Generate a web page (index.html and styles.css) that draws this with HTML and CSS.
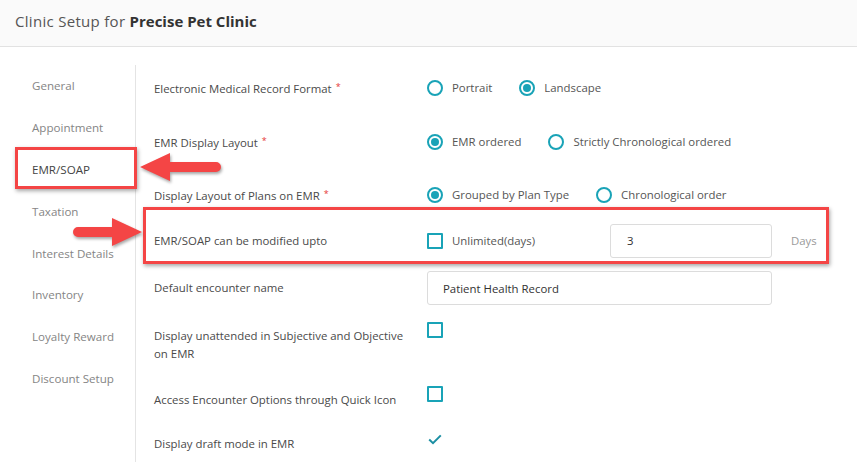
FILE: index.html
```
<!DOCTYPE html>
<html>
<head>
<meta charset="utf-8">
<link rel="stylesheet" href="styles.css">
</head>
<body>
<header class="topbar">
  <h1 class="title">Clinic Setup for <b>Precise Pet Clinic</b></h1>
</header>
<div class="layout">
  <nav class="side">
    <a class="side-item">General</a>
    <a class="side-item">Appointment</a>
    <a class="side-item side-item--active">EMR/SOAP</a>
    <a class="side-item">Taxation</a>
    <a class="side-item">Interest Details</a>
    <a class="side-item">Inventory</a>
    <a class="side-item">Loyalty Reward</a>
    <a class="side-item">Discount Setup</a>
  </nav>
  <main class="form">
    <div class="row row--first">
      <div class="label">Electronic Medical Record Format<span class="req">*</span></div>
      <div class="control">
        <label class="opt"><span class="radio"></span>Portrait</label>
        <label class="opt"><span class="radio radio--on"></span>Landscape</label>
      </div>
    </div>
    <div class="row row--radio">
      <div class="label">EMR Display Layout<span class="req">*</span></div>
      <div class="control">
        <label class="opt"><span class="radio radio--on"></span>EMR ordered</label>
        <label class="opt"><span class="radio"></span>Strictly Chronological ordered</label>
      </div>
    </div>
    <div class="row row--radio">
      <div class="label">Display Layout of Plans on EMR<span class="req">*</span></div>
      <div class="control">
        <label class="opt"><span class="radio radio--on"></span>Grouped by Plan Type</label>
        <label class="opt"><span class="radio"></span>Chronological order</label>
      </div>
    </div>
    <div class="row row--days">
      <div class="label">EMR/SOAP can be modified upto</div>
      <div class="control">
        <label class="opt opt--fixed"><span class="box"></span>Unlimited(days)</label>
        <div class="input input--days">3</div>
        <span class="unit">Days</span>
      </div>
    </div>
    <div class="row row--name">
      <div class="label">Default encounter name</div>
      <div class="control">
        <div class="input input--wide">Patient Health Record</div>
      </div>
    </div>
    <div class="row row--top row--unattended">
      <div class="label">Display unattended in Subjective and Objective on EMR</div>
      <div class="control control--top"><span class="box"></span></div>
    </div>
    <div class="row row--top row--quick">
      <div class="label">Access Encounter Options through Quick Icon</div>
      <div class="control control--top"><span class="box"></span></div>
    </div>
    <div class="row row--top row--draft">
      <div class="label">Display draft mode in EMR</div>
      <div class="control control--check">
        <svg class="tick" width="14" height="11" viewBox="0 0 14 11"><path d="M1.2 5.6 L5 9.2 L12.8 1.4" fill="none" stroke="#1b8fa3" stroke-width="2"/></svg>
      </div>
    </div>
  </main>
</div>

<div class="note note--menu"></div>
<div class="note note--row"></div>
<svg class="arrow arrow--left" width="86" height="36" viewBox="0 0 86 36"><path d="M2 17 L32 3 L32 12 L78 12 A5 5 0 0 1 78 22 L32 22 L32 31 Z" fill="#f44545"/></svg>
<svg class="arrow arrow--right" width="76" height="36" viewBox="0 0 76 36"><path d="M72 17 L42 3 L42 12 L8 12 A5 5 0 0 0 8 22 L42 22 L42 31 Z" fill="#f44545"/></svg>
</body>
</html>
```
FILE: styles.css
```
* { box-sizing: border-box; }
html, body { margin: 0; padding: 0; }
body {
  position: relative;
  width: 857px;
  height: 462px;
  overflow: hidden;
  background: #fff;
  font-family: "Open Sans", "Noto Sans", sans-serif;
  color: #4a4a4a;
}

.topbar {
  height: 47px;
  background: #fafafa;
  border-bottom: 1px solid #e2e2e2;
  padding: 11px 0 0 15px;
}
.title {
  margin: 0;
  font-size: 15px;
  line-height: 20px;
  font-weight: 400;
  letter-spacing: 0.3px;
  color: #555;
}
.title b { font-weight: 700; letter-spacing: 0; color: #333; }

.layout {
  display: flex;
  margin-top: 18px;
  height: 397px;
}
.side {
  flex: 0 0 136px;
  border-right: 1px solid #e4e4e4;
  display: flex;
  flex-direction: column;
}
.side-item {
  height: 41.8px;
  display: flex;
  align-items: center;
  padding-left: 32px;
  font-size: 11.6px;
  color: #858585;
}
.side-item--active { color: #444; }

.form {
  flex: 1;
  padding: 13px 0 0 18px;
}
.row {
  display: flex;
  align-items: center;
}
.row--radio { margin-top: 33.5px; }
.row--days { margin-top: 18.5px; }
.row--name { margin-top: 13.5px; }
.row--top { align-items: flex-start; }
.row--unattended { margin-top: 22px; }
.row--quick { margin-top: 28px; }
.row--draft { margin-top: 26px; }

.label {
  flex: 0 0 273px;
  padding-right: 12px;
  font-size: 11.4px;
  line-height: 18px;
  color: #4a4a4a;
}
.req {
  color: #e53935;
  font-size: 9px;
  margin-left: 4px;
  vertical-align: 3px;
}
.control {
  display: flex;
  align-items: center;
  gap: 27px;
  font-size: 11.4px;
  color: #555;
}
.control--top { margin-top: -5px; }
.control--check { margin-top: -1px; padding-left: 1px; }

.opt {
  display: flex;
  align-items: center;
  gap: 9px;
  line-height: 20px;
}
.opt--fixed { width: 156px; }
.radio {
  width: 16px;
  height: 16px;
  border: 2px solid #19a3b7;
  border-radius: 50%;
  display: inline-flex;
  align-items: center;
  justify-content: center;
}
.radio--on::after {
  content: "";
  width: 8px;
  height: 8px;
  border-radius: 50%;
  background: #19a3b7;
}
.box {
  display: inline-block;
  width: 16px;
  height: 16px;
  border: 2px solid #19a3b7;
  border-radius: 1px;
}
.input {
  height: 34px;
  border: 1px solid #dcdcdc;
  border-radius: 3px;
  display: flex;
  align-items: center;
  font-size: 11.4px;
  color: #333;
}
.input--days { width: 162px; padding-left: 16px; }
.input--wide { width: 345px; padding-left: 15px; }
.unit { color: #9a9a9a; margin-left: -8px; }
.tick { display: block; }

.note {
  position: absolute;
  border: 3px solid #f44545;
  box-shadow: 1px 2px 4px rgba(0, 0, 0, 0.35);
}
.note--menu { left: 15px; top: 147px; width: 122px; height: 42px; }
.note--row { left: 143px; top: 207px; width: 686px; height: 57px; }

.arrow {
  position: absolute;
  filter: drop-shadow(1px 2px 1.5px rgba(0, 0, 0, 0.35));
}
.arrow--left { left: 138px; top: 150px; }
.arrow--right { left: 70px; top: 215px; }
```
